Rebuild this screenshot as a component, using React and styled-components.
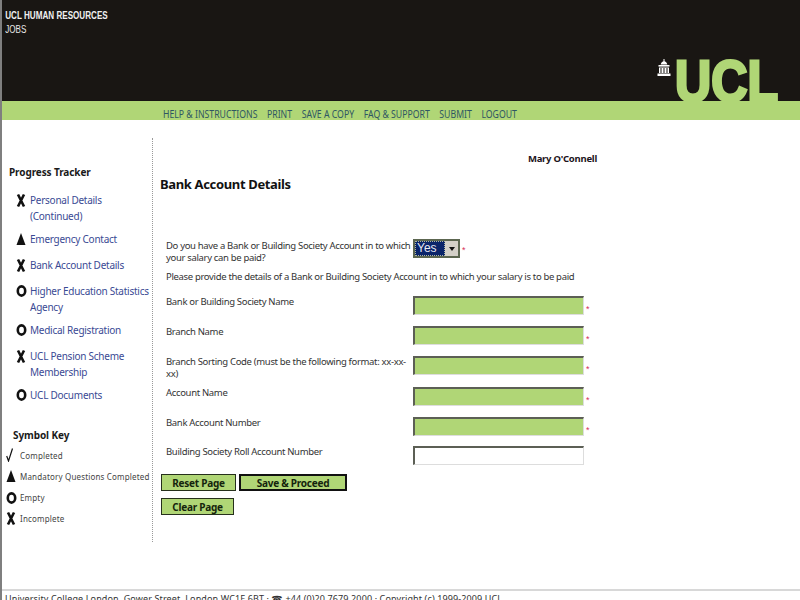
import React from "react";
import styled, { createGlobalStyle } from "styled-components";

const Global = createGlobalStyle`
  html, body { margin: 0; padding: 0; height: 600px; overflow: hidden; background: #fff; }
  body { font-family: "Noto Sans", "DejaVu Sans", sans-serif; color: #333; }
`;
const Page = styled.div`
  width: 798px; height: 600px; overflow: hidden; border-left: 2px solid #7f7f7f;
  display: flex; flex-direction: column;
`;
const Header = styled.header`
  height: 101px; background: #191613; display: flex; justify-content: space-between; flex: none;
`;
const Org = styled.div`
  padding: 9px 0 0 4px; color: #e8e8e8; font: 10px/14px "Liberation Sans", sans-serif;
  transform: scaleX(.81); transform-origin: left top; white-space: nowrap;
  b { display: block; font-weight: 700; color: #f0f0f0; }
`;
const Logo = styled.svg`width: 150px; height: 50px; margin: 51px 0 0 0; display: block; flex: none; overflow: visible;`;
const Nav = styled.nav`
  height: 19px; flex: none; box-sizing: border-box; background: #b0d676; padding: 7px 0 0 161px;
`;
const NavLinks = styled.div`
  display: flex; gap: 11px; font: 10px/13px "Noto Sans", sans-serif; color: #2f5663;
  transform: scaleX(.87); transform-origin: left top; white-space: nowrap;
`;
const Body = styled.div`flex: 1; display: flex; align-items: flex-start; padding-top: 18px; min-height: 0;`;
const Side = styled.aside`
  width: 151px; height: 404px; flex: none; border-right: 1px dotted #999; padding-top: 28px; box-sizing: border-box;
`;
const SideTitle = styled.h3`
  margin: 0 0 13px 7px; font: 700 10px/13px "Noto Sans", sans-serif; color: #1a1a1a; letter-spacing: -.1px;
`;
const Track = styled.ul`list-style: none; margin: 0; padding: 0 0 0 14px; display: flex; flex-direction: column; gap: 10px;`;
const TrackItem = styled.li`
  display: flex; font: 10px/16px "Noto Sans", sans-serif; color: #3a4a94; letter-spacing: -.25px;
  margin-bottom: ${p => (p.$wrapped ? -3 : 0)}px;
`;
const Mark = styled.span`width: 14px; height: 16px; flex: none; display: flex; align-items: center;`;
const KeyTitle = styled(SideTitle)`margin: 26px 0 5px 11px;`;
const KeyList = styled.ul`list-style: none; margin: 0; padding: 0 0 0 4px; display: flex; flex-direction: column; gap: 5.300px;`;
const KeyItem = styled.li`display: flex; height: 16px; align-items: center; font: 8px "Noto Sans", sans-serif; color: #444; white-space: nowrap; letter-spacing: .17px;`;
const Main = styled.main`flex: 1; padding-left: 7px;`;
const Who = styled.div`
  font: 700 9.500px/13px "Noto Sans", sans-serif; letter-spacing: -.25px; color: #1c1420; text-align: right; width: 437px; padding-top: 14px;
`;
const Title = styled.h1`margin: 10px 0 0; font: 700 13px/18px "Noto Sans", sans-serif; letter-spacing: -.35px; color: #111; height: 64px;`;
const Form = styled.div`padding-left: 6px; width: 440px;`;
const Row = styled.div`
  display: grid; grid-template-columns: 247px 171px 1fr; height: ${p => p.$h || 30}px; font: 9.500px/12px "Noto Sans", sans-serif; letter-spacing: -.33px; color: #333;
`;
const Label = styled.div`padding: ${p => p.$pt ?? 0}px 0 0;`;
const Note = styled.div`font: 9.500px/13px "Noto Sans", sans-serif; letter-spacing: -.33px; color: #333; height: 26px; padding-top: 1px; white-space: nowrap;`;
const Field = styled.input`
  box-sizing: border-box; width: 171px; height: 19px; padding: 0; margin: 0;
  border: 1px solid #ddd; border-top: 2px solid #5c5f55; border-left: 2px solid #5c5f55;
  background: ${p => (p.$plain ? "#fff" : "#b0d676")};
`;
const Star = styled.span`color: #d8325a; font: 9px/1 "Liberation Sans", sans-serif; padding: ${p => p.$pt ?? 9}px 0 0 2px;`;
const Choice = styled.div`display: flex; align-items: flex-start;`;
const Selectish = styled.div`
  width: 47px; height: 19px; box-sizing: border-box; display: flex; border: 2px solid #5c6650; background: #d4d0c8;
`;
const Chosen = styled.span`
  flex: 1; background: #0a246a; color: #e8e8f4; font: 12px/15px "Liberation Sans", sans-serif; letter-spacing: 0; padding-left: 2px; outline: 1px dotted #b0b8a0; outline-offset: -1px;
`;
const Arrow = styled.span`width: 13px; display: flex; align-items: center; justify-content: center;
  &::after { content: ""; border: 3px solid transparent; border-top: 4px solid #111; border-bottom: 0; }`;
const Buttons = styled.div`display: flex; gap: 3px; margin: 0 0 7px -5px;`;
const Btn = styled.button`
  box-sizing: border-box; height: 17px; width: ${p => p.$w}px; padding: 0; background: #b0d676; color: #14240c;
  border: ${p => (p.$strong ? 2 : 1)}px solid ${p => (p.$strong ? "#111" : "#26301c")};
  font: 700 10px/1 "Noto Sans", sans-serif; letter-spacing: -.25px;
`;
const Rule = styled.div`height: 2px; background: #d8d8d8; flex: none; margin-top: auto;`;
const Footer = styled.footer`height: 7px; flex: none; overflow: hidden; font: 9px/11px "Noto Sans", "DejaVu Sans", sans-serif; letter-spacing: .12px; color: #333; padding: 2px 0 0 3px; white-space: nowrap;`;

const Ico = {
  x: <svg width="10" height="15" viewBox="0 0 10 15"><path d="M2 1.500 8 13.500M8 1.500 2 13.500" stroke="#111" strokeWidth="2.600" fill="none" /></svg>,
  tri: <svg width="10" height="12" viewBox="0 0 10 12"><path d="M5 0 9.500 12H.5Z" fill="#111" /></svg>,
  o: <svg width="11" height="12" viewBox="0 0 11 12"><ellipse cx="5.500" cy="6" rx="3.700" ry="4.600" fill="none" stroke="#111" strokeWidth="2.600" /></svg>,
  check: <svg width="8" height="14" viewBox="0 0 8 14"><path d="M.7 8 2.500 13 6.500 .5" stroke="#111" strokeWidth="1.200" fill="none" /></svg>,
};

const tracker = [
  ["x", "Personal Details (Continued)", true],
  ["tri", "Emergency Contact"],
  ["x", "Bank Account Details"],
  ["o", "Higher Education Statistics Agency", true],
  ["o", "Medical Registration"],
  ["x", "UCL Pension Scheme Membership", true],
  ["o", "UCL Documents"],
];
const keys = [["check", "Completed"], ["tri", "Mandatory Questions Completed"], ["o", "Empty"], ["x", "Incomplete"]];
const navs = ["HELP & INSTRUCTIONS", "PRINT", "SAVE A COPY", "FAQ & SUPPORT", "SUBMIT", "LOGOUT"];
const rows = [
  ["Bank or Building Society Name", 30, 1],
  ["Branch Name", 30, 1],
  ["Branch Sorting Code (must be the following format: xx-xx-xx)", 31, 1],
  ["Account Name", 30, 1],
  ["Bank Account Number", 29, 1],
  ["Building Society Roll Account Number", 28, 0],
];

export default function App() {
  return (
    <Page>
      <Global />
      <Header>
        <Org><b>UCL HUMAN RESOURCES</b>JOBS</Org>
        <Logo viewBox="0 0 150 50">
          <g transform="translate(3 0)">
            <g fill="#fff">
              <path d="M10.500 8h1v2.200c1.600.6 2.600 1.800 2.800 3.300H7.700c.2-1.500 1.200-2.700 2.800-3.300Z" />
              <rect x="5.500" y="14" width="11" height="1.600" />
              <path d="M6 16.500h10V22H6Z" />
              <rect x="4.500" y="22.500" width="13" height="2.500" />
            </g>
            <g fill="#191613"><rect x="7.500" y="17" width="1" height="5" /><rect x="10.500" y="17" width="1" height="5" /><rect x="13.500" y="17" width="1" height="5" /></g>
          </g>
          <text x="25" y="50" textLength="103" lengthAdjust="spacingAndGlyphs" fontFamily="Liberation Sans, sans-serif" fontWeight="700" fontSize="57" fill="#b0d676" stroke="#b0d676" strokeWidth="3">UCL</text>
        </Logo>
      </Header>
      <Nav><NavLinks>{navs.map(n => <span key={n}>{n}</span>)}</NavLinks></Nav>
      <Body>
        <Side>
          <SideTitle>Progress Tracker</SideTitle>
          <Track>
            {tracker.map(([m, t, w]) => <TrackItem key={t} $wrapped={w}><Mark>{Ico[m]}</Mark><span>{t}</span></TrackItem>)}
          </Track>
          <KeyTitle>Symbol Key</KeyTitle>
          <KeyList>
            {keys.map(([m, t]) => <KeyItem key={t}><Mark>{Ico[m]}</Mark><span>{t}</span></KeyItem>)}
          </KeyList>
        </Side>
        <Main>
          <Who>Mary O'Connell</Who>
          <Title>Bank Account Details</Title>
          <Form>
            <Row $h={30}>
              <Label $pt={1}>Do you have a Bank or Building Society Account in to which your salary can be paid?</Label>
              <Choice><Selectish><Chosen>Yes</Chosen><Arrow /></Selectish><Star $pt={7}>*</Star></Choice>
            </Row>
            <Note>Please provide the details of a Bank or Building Society Account in to which your salary is to be paid</Note>
            {rows.map(([t, h, req]) => (
              <Row key={t} $h={h}>
                <Label>{t}</Label>
                <Field $plain={!req} />
                {req ? <Star>*</Star> : <span />}
              </Row>
            ))}
            <Buttons><Btn $w={75}>Reset Page</Btn><Btn $w={108} $strong>Save &amp; Proceed</Btn></Buttons>
            <Buttons><Btn $w={73}>Clear Page</Btn></Buttons>
          </Form>
        </Main>
      </Body>
      <Rule />
      <Footer>University College London, Gower Street, London WC1E 6BT · ☎ +44 (0)20 7679 2000 · Copyright (c) 1999-2009 UCL</Footer>
    </Page>
  );
}
